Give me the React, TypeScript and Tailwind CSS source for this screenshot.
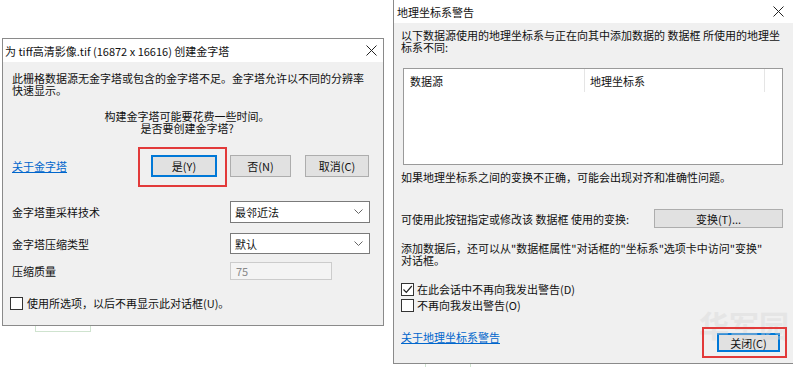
import React from "react";

const font = { fontFamily: '"Noto Sans CJK SC", "Noto Sans", sans-serif' };

function CloseX() {
  return (
    <svg width="11" height="11" viewBox="0 0 11 11">
      <path d="M0.5 0.5 L10.5 10.5 M10.5 0.5 L0.5 10.5" stroke="#222" strokeWidth="1" fill="none" />
    </svg>
  );
}

function Chevron() {
  return (
    <svg width="9" height="6" viewBox="0 0 9 6">
      <path d="M0.5 0.5 L4.5 4.5 L8.5 0.5" stroke="#666" strokeWidth="1" fill="none" />
    </svg>
  );
}

function Checkbox({ checked }: { checked?: boolean }) {
  return (
    <div className="w-[13px] h-[13px] border border-[#333] bg-white flex items-center justify-center shrink-0">
      {checked && (
        <svg width="11" height="11" viewBox="0 0 11 11">
          <path d="M1.5 5.5 L4.3 8.3 L9.8 2" stroke="#222" strokeWidth="1.2" fill="none" />
        </svg>
      )}
    </div>
  );
}

function Btn({ children, w, focus }: { children: React.ReactNode; w: string; focus?: boolean }) {
  return (
    <div
      className={
        "h-full flex items-center justify-center bg-[#e1e1e1] text-[#111] " +
        w +
        (focus ? " border-2 border-[#0078d7]" : " border border-[#adadad]")
      }
    >
      {children}
    </div>
  );
}

export default function App() {
  return (
    <div
      className="w-[793px] h-[367px] overflow-hidden bg-white flex text-[11px] leading-[12px] text-[#111]"
      style={font}
    >
      {/* Left column */}
      <div className="w-[393px] shrink-0 pt-[38px] pl-[2px]">
        <div className="w-[382px] border border-[#8a8a8a] bg-[#f0f0f0]">
          <div className="h-[23px] bg-white flex items-center justify-between pl-[2px] pr-[6px]">
            <span className="whitespace-nowrap">为 tiff高清影像.tif (16872 x 16616) 创建金字塔</span>
            <CloseX />
          </div>
          <div className="pl-[9px] pr-[13px] pt-[10px] pb-[15px]">
            <div className="whitespace-nowrap">
              此栅格数据源无金字塔或包含的金字塔不足。金字塔允许以不同的分辨率
              <br />
              快速显示。
            </div>
            <div className="mt-[14px] text-center whitespace-nowrap pr-[8px]">
              构建金字塔可能要花费一些时间。
              <br />
              是否要创建金字塔?
            </div>
            <div className="mt-[21px] h-[22px] flex items-center">
              <div className="w-[139px]">
                <span className="text-[#0066cc] underline">关于金字塔</span>
              </div>
              <div className="relative h-full">
                <div className="absolute left-[-13px] top-[-8px] w-[89px] h-[40px] border-2 border-[#e23a3a]" />
                <Btn w="w-[66px]" focus>
                  是(Y)
                </Btn>
              </div>
              <div className="ml-[13px] h-full">
                <Btn w="w-[61px]">否(N)</Btn>
              </div>
              <div className="ml-[14px] h-full">
                <Btn w="w-[64px]">取消(C)</Btn>
              </div>
            </div>
            <div className="mt-[24px] h-[22px] flex items-center justify-between">
              <span>金字塔重采样技术</span>
              <div className="w-[140px] h-full bg-white border border-[#7a7a7a] flex items-center justify-between pl-[4px] pr-[6px]">
                <span>最邻近法</span>
                <Chevron />
              </div>
            </div>
            <div className="mt-[10px] h-[21px] flex items-center justify-between">
              <span>金字塔压缩类型</span>
              <div className="w-[140px] h-full bg-white border border-[#7a7a7a] flex items-center justify-between pl-[4px] pr-[6px]">
                <span>默认</span>
                <Chevron />
              </div>
            </div>
            <div className="mt-[8px] h-[18px] flex items-center">
              <span className="w-[218px]">压缩质量</span>
              <div className="w-[102px] h-full bg-[#f4f4f4] border border-[#cccccc] flex items-center pl-[5px] text-[#8a8a8a]">
                75
              </div>
            </div>
            <div className="mt-[16px] h-[14px] flex items-center gap-[4px] -ml-[2px]">
              <Checkbox />
              <span className="whitespace-nowrap">使用所选项，以后不再显示此对话框(U)。</span>
            </div>
          </div>
        </div>
        <div className="ml-[33px] w-[56px] h-[6px] border-x border-b border-[#cfe3cf]" />
      </div>

      {/* Right column */}
      <div className="w-[401px] shrink-0">
        <div className="w-[401px] h-[364px] border-l border-b border-[#8a8a8a] bg-[#f0f0f0] flex flex-col">
          <div className="h-[23px] bg-white flex items-center justify-between pl-[3px] pr-[10px] shrink-0">
            <span>地理坐标系警告</span>
            <CloseX />
          </div>
          <div className="relative flex-1 pl-[7px] pr-[11px] pt-[6px]">
            <div className="whitespace-nowrap">
              以下数据源使用的地理坐标系与正在向其中添加数据的 数据框 所使用的地理坐
              <br />
              标系不同:
            </div>
            <div className="mt-[15px] ml-[2px] w-[380px] h-[97px] bg-white border border-[#9a9a9a] flex items-start">
              <div className="w-[181px] h-[23px] border-r border-[#e5e5e5] flex items-center pl-[6px]">数据源</div>
              <div className="w-[180px] h-[23px] border-r border-[#e5e5e5] flex items-center pl-[5px]">地理坐标系</div>
            </div>
            <div className="mt-[6px] whitespace-nowrap">如果地理坐标系之间的变换不正确，可能会出现对齐和准确性问题。</div>
            <div className="mt-[26px] h-[19px] flex items-center justify-between">
              <span className="whitespace-nowrap">可使用此按钮指定或修改该 数据框 使用的变换:</span>
              <Btn w="w-[129px]">变换(T)...</Btn>
            </div>
            <div className="mt-[14px] whitespace-nowrap">
              添加数据后，还可以从"数据框属性"对话框的"坐标系"选项卡中访问"变换"
              <br />
              对话框。
            </div>
            <div className="mt-[15px] h-[16px] flex items-center gap-[3px]">
              <Checkbox checked />
              <span>在此会话中不再向我发出警告(D)</span>
            </div>
            <div className="h-[16px] flex items-center gap-[3px]">
              <Checkbox />
              <span>不再向我发出警告(O)</span>
            </div>
            <div className="mt-[20px] h-[19px] flex items-start justify-between">
              <span className="text-[#0066cc] underline -mt-[2px]">关于地理坐标系警告</span>
              <div className="relative h-full mr-[3px]">
                <div className="absolute left-[-18px] top-[-24px] text-[30px] leading-[30px] font-bold text-[#d6d6d6] opacity-40 whitespace-nowrap">
                  华军园
                </div>
                <div className="absolute left-[-15px] top-[-6px] w-[85px] h-[31px] border-2 border-[#e23a3a]" />
                <Btn w="w-[63px]" focus>
                  关闭(C)
                </Btn>
              </div>
            </div>
          </div>
        </div>
        <div className="ml-[32px] w-[46px] h-[4px] border-x border-[#cfe3cf]" />
      </div>
    </div>
  );
}
